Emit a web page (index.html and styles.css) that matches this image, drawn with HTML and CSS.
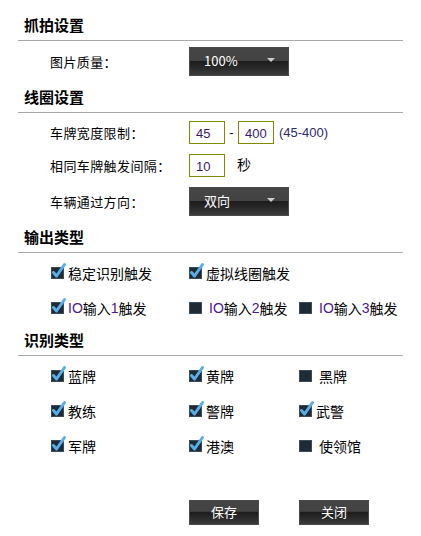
FILE: index.html
```html
<!DOCTYPE html>
<html lang="zh-CN">
<head>
    <meta charset="UTF-8">
    <title>抓拍设置</title>
    <link rel="stylesheet" href="styles.css">
</head>
<body>
    <h3 class="title">抓拍设置</h3>
    <div class="fields">
        <div class="field">
            <label class="field-label">图片质量：</label>
            <div class="dark-select"><span>100%</span><i class="arrow"></i></div>
        </div>
    </div>

    <h3 class="title">线圈设置</h3>
    <div class="fields">
        <div class="field">
            <label class="field-label">车牌宽度限制：</label>
            <input class="num" type="text" value="45">
            <span class="dash">-</span>
            <input class="num" type="text" value="400">
            <span class="hint">(45-400)</span>
        </div>
        <div class="field">
            <label class="field-label">相同车牌触发间隔：</label>
            <input class="num" type="text" value="10">
            <span class="unit">秒</span>
        </div>
        <div class="field">
            <label class="field-label">车辆通过方向：</label>
            <div class="dark-select"><span>双向</span><i class="arrow"></i></div>
        </div>
    </div>

    <h3 class="title">输出类型</h3>
    <div class="checks checks-out">
        <label class="check on"><svg viewBox="0 0 17 17"><rect x="1.5" y="5.5" width="12" height="11"/><path d="M3.5 10.5 L6.5 14 L14.5 2.5"/></svg>稳定识别触发</label>
        <label class="check on"><svg viewBox="0 0 17 17"><rect x="1.5" y="5.5" width="12" height="11"/><path d="M3.5 10.5 L6.5 14 L14.5 2.5"/></svg>虚拟线圈触发</label>
        <span></span>
        <label class="check on"><svg viewBox="0 0 17 17"><rect x="1.5" y="5.5" width="12" height="11"/><path d="M3.5 10.5 L6.5 14 L14.5 2.5"/></svg><em>IO</em>输入<em>1</em>触发</label>
        <label class="check"><svg viewBox="0 0 17 17"><rect x="1.5" y="5.5" width="12" height="11"/></svg><em>IO</em>输入<em>2</em>触发</label>
        <label class="check"><svg viewBox="0 0 17 17"><rect x="1.5" y="5.5" width="12" height="11"/></svg><em>IO</em>输入<em>3</em>触发</label>
    </div>

    <h3 class="title">识别类型</h3>
    <div class="checks">
        <label class="check on"><svg viewBox="0 0 17 17"><rect x="1.5" y="5.5" width="12" height="11"/><path d="M3.5 10.5 L6.5 14 L14.5 2.5"/></svg>蓝牌</label>
        <label class="check on"><svg viewBox="0 0 17 17"><rect x="1.5" y="5.5" width="12" height="11"/><path d="M3.5 10.5 L6.5 14 L14.5 2.5"/></svg>黄牌</label>
        <label class="check"><svg viewBox="0 0 17 17"><rect x="1.5" y="5.5" width="12" height="11"/></svg>黑牌</label>
        <label class="check on"><svg viewBox="0 0 17 17"><rect x="1.5" y="5.5" width="12" height="11"/><path d="M3.5 10.5 L6.5 14 L14.5 2.5"/></svg>教练</label>
        <label class="check on"><svg viewBox="0 0 17 17"><rect x="1.5" y="5.5" width="12" height="11"/><path d="M3.5 10.5 L6.5 14 L14.5 2.5"/></svg>警牌</label>
        <label class="check on"><svg viewBox="0 0 17 17"><rect x="1.5" y="5.5" width="12" height="11"/><path d="M3.5 10.5 L6.5 14 L14.5 2.5"/></svg>武警</label>
        <label class="check on"><svg viewBox="0 0 17 17"><rect x="1.5" y="5.5" width="12" height="11"/><path d="M3.5 10.5 L6.5 14 L14.5 2.5"/></svg>军牌</label>
        <label class="check on"><svg viewBox="0 0 17 17"><rect x="1.5" y="5.5" width="12" height="11"/><path d="M3.5 10.5 L6.5 14 L14.5 2.5"/></svg>港澳</label>
        <label class="check"><svg viewBox="0 0 17 17"><rect x="1.5" y="5.5" width="12" height="11"/></svg>使领馆</label>
    </div>

    <div class="buttons">
        <button class="dark-btn" type="button">保存</button>
        <button class="dark-btn" type="button">关闭</button>
    </div>
</body>
</html>
```

FILE: styles.css
```css
body {
    margin: 0;
    font-family: "Noto Sans CJK SC", "Liberation Sans", sans-serif;
    font-size: 13px;
    color: #000;
    background: #fff;
}
.title {
    margin: 15px 18px 0;
    padding: 0 0 5px 6px;
    font-size: 15px;
    font-weight: bold;
    line-height: 20px;
    border-bottom: 1px solid #aaa;
    width: 379px;
}
.fields + .title {
    margin-top: 0;
}
.checks + .title {
    margin-top: 0;
}
.fields {
    padding: 6px 0 11px 50px;
    display: flex;
    flex-direction: column;
    gap: 10px;
}
.title + .fields + .title + .fields {
    padding-top: 8px;
}
.field {
    display: flex;
    align-items: center;
}
.field-label {
    width: 139px;
    line-height: 20px;
    letter-spacing: 0.4px;
}
.dark-select {
    width: 100px;
    height: 29px;
    box-sizing: border-box;
    border: 1px solid #4a4a4a;
    background: linear-gradient(#454545 0, #434343 48%, #1d1d1d 50%, #2a2a2a 75%, #3c3c3c 100%);
    color: #fff;
    display: flex;
    align-items: center;
    justify-content: space-between;
    padding: 0 13px 2px 14px;
    font-size: 13px;
}
.arrow {
    width: 0;
    height: 0;
    border-left: 4px solid transparent;
    border-right: 4px solid transparent;
    border-top: 4px solid #ccc;
    margin-top: -2px;
}
.num {
    width: 36px;
    height: 23px;
    box-sizing: border-box;
    border: 1px solid #7f8a00;
    padding: 2px 0 0 6px;
    font-family: "Liberation Sans", sans-serif;
    font-size: 13px;
    color: #3a1a66;
    outline: none;
}
.dash {
    width: 13px;
    text-align: center;
    font-family: "Liberation Sans", sans-serif;
}
.hint {
    margin-left: 5px;
    font-family: "Liberation Sans", sans-serif;
    color: #2e2a6a;
}
.unit {
    margin-left: 12px;
    margin-top: -3px;
    font-size: 14px;
}
.checks {
    display: grid;
    grid-template-columns: 138px 110px auto;
    grid-auto-rows: 35px;
    padding: 2px 0 0 51px;
    font-size: 14px;
}
.checks-out {
    padding-bottom: 5px;
}
.check {
    display: flex;
    align-items: center;
    white-space: nowrap;
}
.check svg {
    width: 17px;
    height: 17px;
    margin: -4px 1px 0 -1px;
    flex: none;
}
.check rect {
    fill: #1e2a36;
    stroke: #3d4c5a;
    stroke-width: 1;
}
.check path {
    fill: none;
    stroke: #58aee8;
    stroke-width: 3;
    stroke-linecap: round;
    stroke-linejoin: round;
}
.check:not(.on) svg {
    margin-right: 4px;
}
.check em {
    font-style: normal;
    font-family: "Liberation Sans", sans-serif;
    color: #4a1a8a;
}
.buttons {
    display: flex;
    gap: 40px;
    padding: 37px 0 0 189px;
}
.dark-btn {
    width: 70px;
    height: 25px;
    border: 1px solid #4a4a4a;
    background: linear-gradient(#454545 0, #434343 45%, #1d1d1d 48%, #2a2a2a 75%, #3c3c3c 100%);
    color: #fff;
    font-family: "Noto Sans CJK SC", sans-serif;
    font-size: 13px;
    padding: 0 0 2px;
}
```
